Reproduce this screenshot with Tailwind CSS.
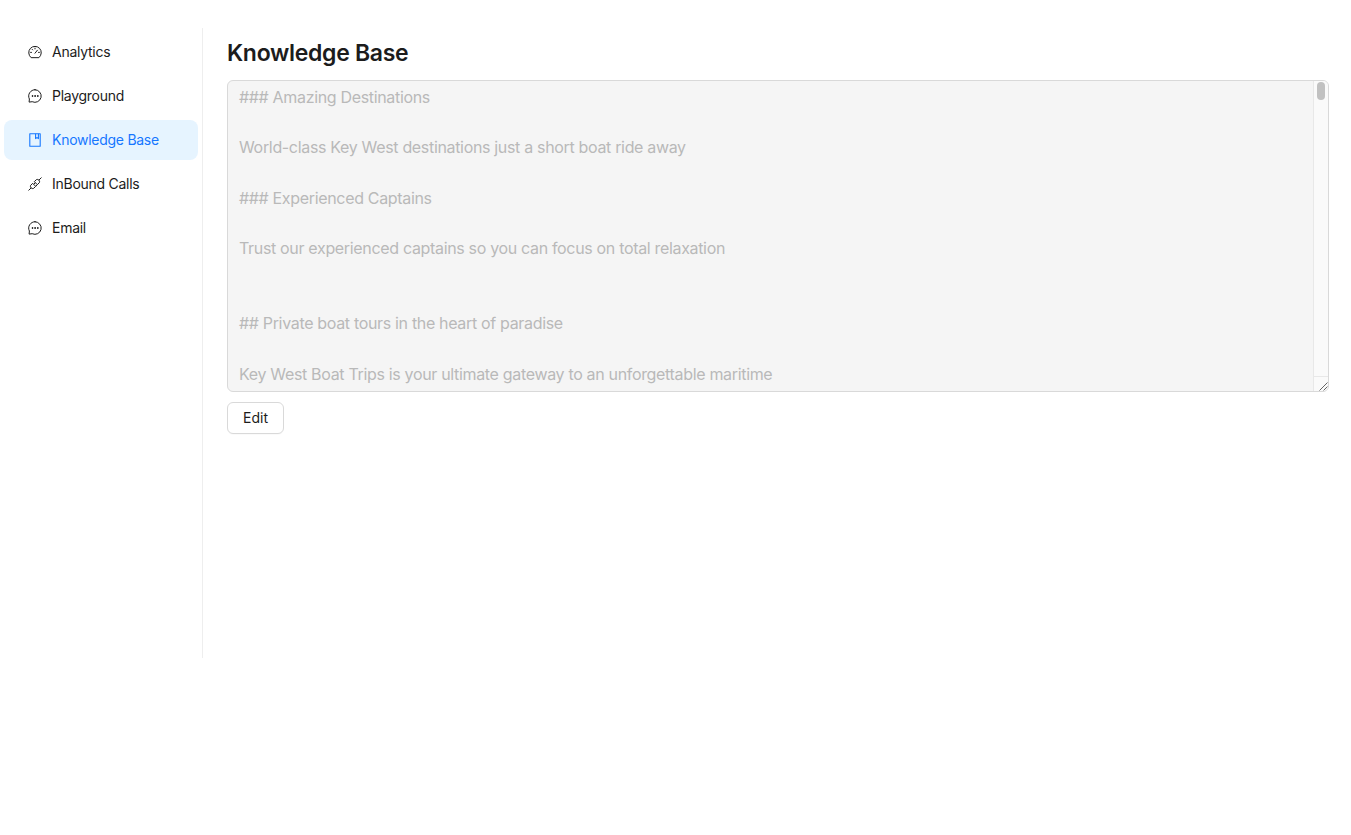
<!DOCTYPE html>
<html lang="en">
<head>
  <meta charset="UTF-8" />
  <meta name="viewport" content="width=device-width, initial-scale=1" />
  <title>Knowledge Base</title>
  <script src="https://cdn.jsdelivr.net/npm/@tailwindcss/browser@4"></script>
</head>
<body class="bg-white min-h-screen font-['Inter',sans-serif] text-[#1c1c1c]">
  <div class="flex items-start pt-7">
    <!-- sidebar -->
    <nav class="w-[203px] h-[630px] shrink-0 border-r border-[#eeeeee] pt-1 px-1 flex flex-col gap-1 text-sm tracking-[-0.27px]">
      <a class="h-10 w-[194px] rounded-lg flex items-center gap-[10px] pl-6">
        <svg class="w-[14px] h-[14px]" viewBox="0 0 14 14" fill="none" stroke="currentColor" stroke-width="1" stroke-linecap="round" stroke-linejoin="round"><path d="M2.8 12.4 A6.3 6.3 0 1 1 11.2 12.4 Z"/><path d="M7 8.2 L9.4 5.2"/><path d="M2.6 7.4h.9M10.5 7.4h.9M4.2 4.4l.5.5M7 3.1v.8"/></svg>
        <span>Analytics</span>
      </a>
      <a class="h-10 w-[194px] rounded-lg flex items-center gap-[10px] pl-6">
        <svg class="w-[14px] h-[14px]" viewBox="0 0 14 14" fill="none" stroke="currentColor" stroke-width="1" stroke-linecap="round" stroke-linejoin="round"><path d="M7 .7 A6.3 6.3 0 1 1 4.2 12.7 L1.1 13.1 L1.4 10 A6.3 6.3 0 0 1 7 .7 Z"/><circle cx="4.3" cy="7" r=".4" fill="currentColor"/><circle cx="7" cy="7" r=".4" fill="currentColor"/><circle cx="9.7" cy="7" r=".4" fill="currentColor"/></svg>
        <span>Playground</span>
      </a>
      <a class="h-10 w-[194px] rounded-lg flex items-center gap-[10px] pl-6 bg-[#e6f4ff] text-[#1677ff]">
        <svg class="w-[14px] h-[14px]" viewBox="0 0 14 14" fill="none" stroke="currentColor" stroke-width="1.1" stroke-linejoin="round"><path d="M1.8 .8h10.4v12.4H1.8z"/><path d="M7.6 .8v4.8l1.4-1 1.4 1V.8"/></svg>
        <span>Knowledge Base</span>
      </a>
      <a class="h-10 w-[194px] rounded-lg flex items-center gap-[10px] pl-6">
        <svg class="w-[14px] h-[14px]" viewBox="0 0 14 14" fill="none" stroke="currentColor" stroke-width="1" stroke-linecap="round" stroke-linejoin="round"><path d="M13.2 .8 L11.3 2.7"/><path d="M.8 13.2 L2.7 11.3"/><path d="M6.6 4.4 L8.4 2.6 A2.3 2.3 0 0 1 11.4 5.6 L9.6 7.4 Z"/><path d="M7.4 9.6 L5.6 11.4 A2.3 2.3 0 0 1 2.6 8.4 L4.4 6.6 Z"/><path d="M6 7 L7 6M8 9 L9 8"/></svg>
        <span>InBound Calls</span>
      </a>
      <a class="h-10 w-[194px] rounded-lg flex items-center gap-[10px] pl-6">
        <svg class="w-[14px] h-[14px]" viewBox="0 0 14 14" fill="none" stroke="currentColor" stroke-width="1" stroke-linecap="round" stroke-linejoin="round"><path d="M7 .7 A6.3 6.3 0 1 1 4.2 12.7 L1.1 13.1 L1.4 10 A6.3 6.3 0 0 1 7 .7 Z"/><circle cx="4.3" cy="7" r=".4" fill="currentColor"/><circle cx="7" cy="7" r=".4" fill="currentColor"/><circle cx="9.7" cy="7" r=".4" fill="currentColor"/></svg>
        <span>Email</span>
      </a>
    </nav>

    <!-- main -->
    <main class="flex-1 pl-6 pr-[22px]">
      <h1 class="text-[23px] font-semibold h-[52px] leading-[50px] tracking-[-0.3px]">Knowledge Base</h1>
      <div class="flex h-[312px] rounded-md border border-[#d9d9d9] bg-[#f5f5f5] overflow-hidden">
        <div class="flex-1 px-[11px] pt-1 text-base leading-[25.14px] tracking-[-0.33px] text-[#b9b9b9] whitespace-pre-line">### Amazing Destinations

World-class Key West destinations just a short boat ride away

### Experienced Captains

Trust our experienced captains so you can focus on total relaxation


## Private boat tours in the heart of paradise

Key West Boat Trips is your ultimate gateway to an unforgettable maritime</div>
        <!-- scrollbar -->
        <div class="w-[15px] shrink-0 bg-[#fafafa] border-l border-[#e8e8e8] flex flex-col">
          <div class="flex-1 pt-[1px] flex justify-center">
            <div class="w-[8px] h-[18px] rounded-full bg-[#c1c1c1]"></div>
          </div>
          <div class="h-[15px] border-t border-[#e8e8e8] flex items-end justify-end">
            <svg class="w-[10px] h-[10px]" viewBox="0 0 10 10" fill="none" stroke="#666666" stroke-width="1"><path d="M1.5 9.5 L9.5 1.5M5.5 9.5 L9.5 5.5"/></svg>
          </div>
        </div>
      </div>
      <button class="mt-[10px] h-8 w-[57px] rounded-md border border-[#d9d9d9] bg-white text-sm shadow-[0_1px_0_rgba(0,0,0,0.02)]">Edit</button>
    </main>
  </div>
</body>
</html>
